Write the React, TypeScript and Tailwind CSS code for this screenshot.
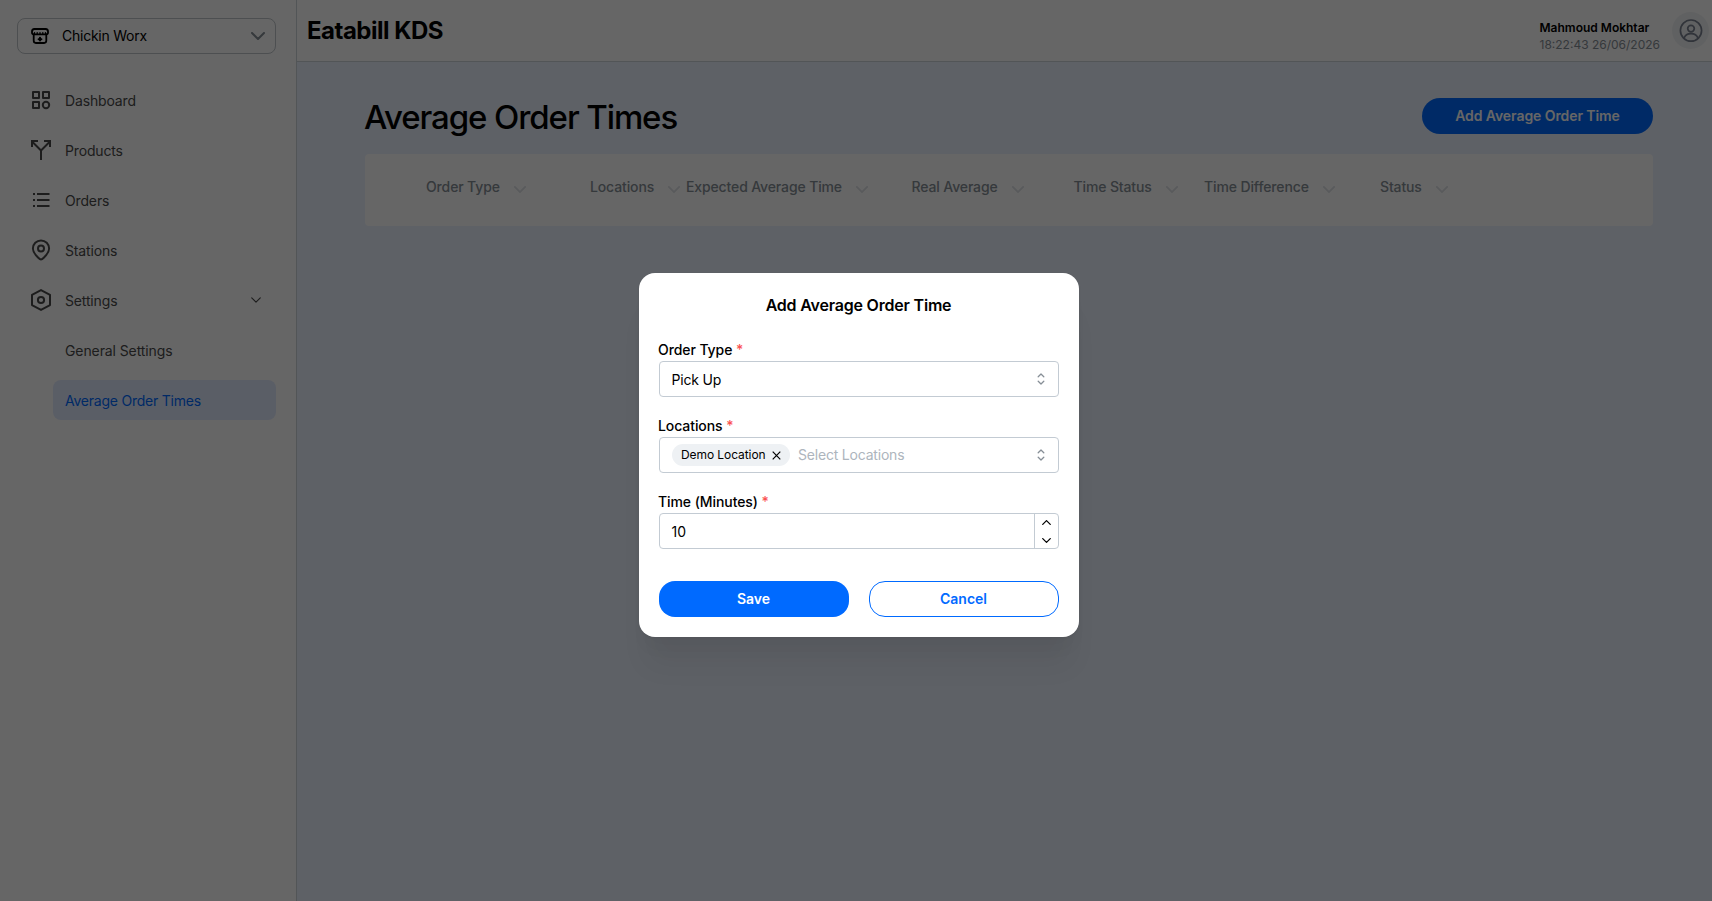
import React from "react";

const Chevron = ({ className, weight = 1.6 }: { className: string; weight?: number }) => (
  <svg viewBox="0 0 14 8" fill="none" stroke="currentColor" strokeWidth={weight} strokeLinecap="round" strokeLinejoin="round" className={className}>
    <path d="M1 1l6 6 6-6" />
  </svg>
);

const StoreIcon = () => (
  <svg width="18" height="16" viewBox="0 0 18 16" fill="none" stroke="#000" strokeWidth="1.8" strokeLinejoin="round" strokeLinecap="round">
    <path d="M3.4 1h11.2C16 1 17 2.3 17 3.6v1.2c0 1-.6 1.5-1.5 1.5h-13C1.6 6.3 1 5.8 1 4.8V3.6C1 2.3 2 1 3.4 1z" />
    <path d="M3.5 4.6v1.2M6.2 4.6v1.2M9 4.6v1.2M11.8 4.6v1.2M14.5 4.6v1.2" strokeWidth="1.3" />
    <path d="M2.7 6.5v6.1c0 1.4.8 2.4 2.2 2.4h8.2c1.4 0 2.2-1 2.2-2.4V6.5" />
    <path d="M9 9.8v2.8M7.6 11.2h2.8" strokeWidth="2" />
  </svg>
);

const DashboardIcon = () => (
  <svg width="20" height="20" viewBox="0 0 20 20" fill="none" stroke="currentColor" strokeWidth="2">
    <path d="M2 2h6v6H2zM12 2h6v6h-6zM2 12h6v6H2z" strokeLinejoin="round" />
    <circle cx="15" cy="15" r="3.2" />
  </svg>
);

const SplitIcon = () => (
  <svg width="20" height="20" viewBox="0 0 20 20" fill="none" stroke="currentColor" strokeWidth="2">
    <path d="M10 20v-9.5L1 1.5M10 10.5l9-9M1 7V1h6M13 1h6v6" />
  </svg>
);

const ListIcon = () => (
  <svg width="20" height="20" viewBox="0 0 20 20" fill="none" stroke="currentColor" strokeWidth="2">
    <path d="M6 4h12.5M6 10h12.5M6 16h12.5M2 4h2M2 10h2M2 16h2" />
  </svg>
);

const PinIcon = () => (
  <svg width="20" height="22" viewBox="0 0 20 22" fill="none" stroke="currentColor" strokeWidth="2">
    <path d="M10 20.5c-1 0-1.6-.6-3-2C4.5 16 1.9 13.3 1.9 9.5a8.1 8.1 0 0 1 16.2 0c0 3.8-2.6 6.5-5.1 9-1.4 1.4-2 2-3 2z" />
    <circle cx="10" cy="9.5" r="3" />
  </svg>
);

const HexIcon = () => (
  <svg width="20" height="22" viewBox="0 0 20 22" fill="none" stroke="currentColor" strokeWidth="2" strokeLinejoin="round">
    <path d="M10 1.1l9 4.8v10.2l-9 4.8-9-4.8V5.9z" />
    <circle cx="10" cy="11" r="3.1" />
  </svg>
);

const UserIcon = () => (
  <svg width="24" height="24" viewBox="0 0 24 24" fill="none" stroke="#7a8291" strokeWidth="1.7">
    <circle cx="12" cy="11.6" r="10.6" />
    <circle cx="12" cy="9.6" r="3.3" />
    <path d="M5 19.3c1-3 3.6-4.7 7-4.7s6 1.7 7 4.7" />
  </svg>
);

const Updown = () => (
  <svg width="8" height="12" viewBox="0 0 8 12" fill="none" stroke="#868e96" strokeWidth="1.3" strokeLinecap="round" strokeLinejoin="round" className="mr-[13px] shrink-0">
    <path d="M1.2 3.7L4 1l2.8 2.7M1.2 8.3L4 11l2.8-2.7" />
  </svg>
);

const items: [string, () => React.ReactElement][] = [
  ["Dashboard", DashboardIcon],
  ["Products", SplitIcon],
  ["Orders", ListIcon],
  ["Stations", PinIcon],
  ["Settings", HexIcon],
];

const Column = ({ label, className }: { label: string; className: string }) => (
  <div className={`flex shrink-0 items-center ${className}`}>
    <span className="whitespace-nowrap">{label}</span>
    <Chevron className="ml-3.5 mt-[5px] h-[7px] w-3 text-[#dee2e6]" weight={2} />
  </div>
);

const Label = ({ text }: { text: string }) => (
  <div className="-ml-px h-[22px] text-sm leading-[22px] font-medium tracking-[-0.08px]">
    {text} <span className="text-[#fa5252]">*</span>
  </div>
);

export default function App() {
  return (
    <div className="relative h-[901px] w-[1712px] overflow-hidden bg-white font-[Inter,sans-serif] text-black">
      <div className="flex h-full">
        <aside className="w-[297px] shrink-0 border-r border-[#ced4da] px-[17px] pt-[18px] text-[#4a4a4a]">
          <div className="flex h-9 w-[259px] items-center rounded-lg border border-[#c0c5ca] pl-[13px] text-black">
            <StoreIcon />
            <span className="ml-[13px] flex-1 text-sm tracking-[-0.25px]">Chickin Worx</span>
            <Chevron className="mr-2.5 h-2 w-3.5 text-[#868e96]" weight={2} />
          </div>
          <nav className="mt-[26px] flex flex-col gap-2.5 text-sm tracking-[-0.15px]">
            {items.map(([label, Icon]) => (
              <div key={label} className="flex h-10 w-[259px] items-center pl-3.5">
                <Icon />
                <span className="mt-0.5 ml-3.5 flex-1">{label}</span>
                {label === "Settings" && <Chevron className="mr-[15px] h-1.5 w-2.5" />}
              </div>
            ))}
            <div className="flex h-10 items-center pt-0.5 pl-12 tracking-[-0.1px]">General Settings</div>
            <div className="ml-9 flex h-10 w-[223px] items-center rounded-lg bg-[#e2eaff] pt-0.5 pl-3 tracking-[-0.23px] text-[#006aff]">Average Order Times</div>
          </nav>
        </aside>
        <div className="flex flex-1 flex-col">
          <header className="flex h-[62px] shrink-0 items-center border-b border-[#ced4da] pr-[3px] pl-2.5">
            <h1 className="flex-1 text-2xl font-bold tracking-[-0.5px]">Eatabill KDS</h1>
            <div className="mt-2.5 mr-3 text-xs leading-[17px]">
              <div className="font-semibold">Mahmoud Mokhtar</div>
              <div className="text-[#868e96]">18:22:43 26/06/2026</div>
            </div>
            <div className="flex size-[37px] items-center justify-center rounded-full bg-[#f1f3f5]">
              <UserIcon />
            </div>
          </header>
          <main className="flex-1 bg-[#ebf2ff] pt-9 pr-[59px] pl-[68px]">
            <div className="flex h-9 items-center justify-between">
              <h2 className="-ml-px pt-[3px] text-[33px] font-medium tracking-[-1.1px]">Average Order Times</h2>
              <button className="h-9 w-[231px] rounded-[18px] bg-[#006aff] px-0 text-sm font-semibold tracking-[-0.08px] text-white">Add Average Order Time</button>
            </div>
            <div className="mt-5 flex h-[72px] rounded bg-white pt-[23px] pl-[61px] text-sm font-medium tracking-[-0.13px] text-[#868e96] *:h-5">
              <Column label="Order Type" className="w-[164px]" />
              <Column label="Locations" className="w-[96px]" />
              <Column label="Expected Average Time" className="w-[225.5px]" />
              <Column label="Real Average" className="w-[162px]" />
              <Column label="Time Status" className="w-[130.5px]" />
              <Column label="Time Difference" className="w-[176px]" />
              <Column label="Status" className="w-[90px]" />
            </div>
          </main>
        </div>
      </div>
      <div className="absolute inset-0 flex bg-black/60">
        <section className="mt-[273px] ml-[639px] h-[364px] w-[440px] rounded-2xl bg-white px-5 pt-5 shadow-[0_1px_3px_rgba(0,0,0,0.05),0_36px_28px_-7px_rgba(0,0,0,0.05),0_17px_17px_-7px_rgba(0,0,0,0.04)]">
          <h3 className="pr-px text-center text-base leading-6 font-semibold tracking-[-0.2px]">Add Average Order Time</h3>
          <div className="mt-[22px]">
            <Label text="Order Type" />
            <div className="flex h-9 items-center rounded border border-[#c3cbd3] pl-[11.5px] text-sm">
              <span className="flex-1 pt-0.5 tracking-[-0.2px]">Pick Up</span>
              <Updown />
            </div>
          </div>
          <div className="mt-[18px]">
            <Label text="Locations" />
            <div className="flex h-9 items-center rounded border border-[#c3cbd3] pl-3 text-sm">
              <span className="flex h-[22px] w-[118px] items-center rounded-full bg-[#eef1f4] pl-[9px] text-xs tracking-[-0.08px]">
                Demo Location
                <svg width="9" height="9" viewBox="0 0 9 9" stroke="#000" strokeWidth="1.2" className="ml-[6.5px]"><path d="M.7.7l7.6 7.6M8.300.7L.7 8.300" /></svg>
              </span>
              <span className="ml-2 flex-1 tracking-[-0.2px] text-[#adb5bd]">Select Locations</span>
              <Updown />
            </div>
          </div>
          <div className="mt-[18px]">
            <Label text="Time (Minutes)" />
            <div className="flex h-9 items-center rounded border border-[#c3cbd3] pl-[11.5px] text-sm">
              <span className="flex-1 pt-0.5">10</span>
              <div className="flex h-full w-6 flex-col items-center justify-between border-l border-[#c3cbd3] pt-1.5 pr-px pb-[5px]">
                <Chevron className="h-[5px] w-[9px] rotate-180" weight={2} />
                <Chevron className="h-[5px] w-[9px]" weight={2} />
              </div>
            </div>
          </div>
          <div className="mt-8 flex gap-5 text-sm font-semibold">
            <button className="h-9 w-[190px] rounded-2xl bg-[#006aff] pr-px text-white">Save</button>
            <button className="h-9 w-[190px] rounded-2xl border border-[#006aff] pr-px text-[#006aff]">Cancel</button>
          </div>
        </section>
      </div>
    </div>
  );
}
